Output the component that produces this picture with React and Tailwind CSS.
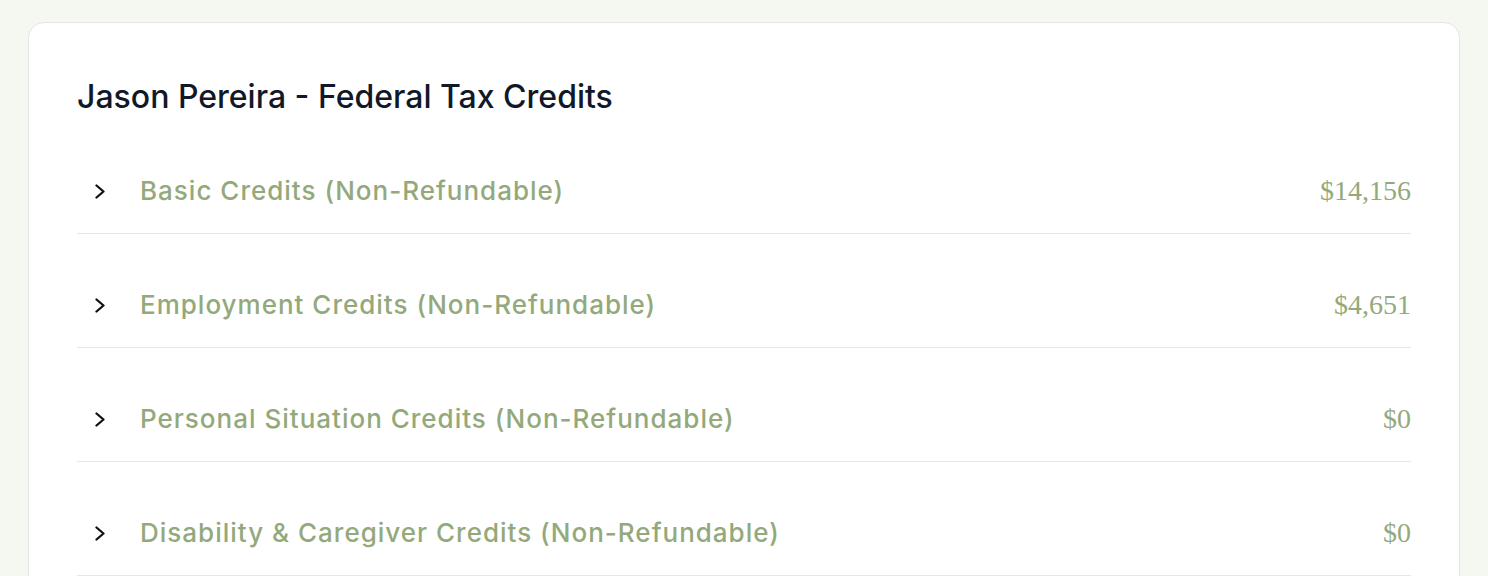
import React from "react";

const credits = [
  { label: "Basic Credits (Non-Refundable)", amount: "$14,156" },
  { label: "Employment Credits (Non-Refundable)", amount: "$4,651" },
  { label: "Personal Situation Credits (Non-Refundable)", amount: "$0" },
  { label: "Disability & Caregiver Credits (Non-Refundable)", amount: "$0" },
];

const Chevron = () => (
  <svg width="12" height="15" viewBox="0 0 12 15" fill="none" className="shrink-0">
    <polyline
      points="2.5,1.5 9.5,7.5 2.5,13.5"
      stroke="#111111"
      strokeWidth="2.3"
      strokeLinecap="round"
      strokeLinejoin="round"
    />
  </svg>
);

const App = () => {
  return (
    <div className="min-h-screen bg-[#f5f7f1] px-7 pt-[22px] font-['Inter',sans-serif]">
      <div className="rounded-2xl border border-[#e6e7e4] bg-white px-12 pt-14 pb-10">
        <h1 className="text-[32px] leading-9 font-medium text-[#111827]">
          Jason Pereira - Federal Tax Credits
        </h1>
        <div className="mt-[34px] flex flex-col gap-[29px]">
          {credits.map((c) => (
            <div
              key={c.label}
              className="flex h-[85px] items-center border-b border-[#e5e7eb] pl-[17px]"
            >
              <Chevron />
              <span className="ml-[34px] text-[26px] leading-8 font-medium tracking-[1px] text-[#94a97b]">
                {c.label}
              </span>
              <span className="ml-auto font-['Liberation_Serif',serif] text-[28px] leading-8 text-[#94a97b]">
                {c.amount}
              </span>
            </div>
          ))}
        </div>
      </div>
    </div>
  );
};

export default App;
